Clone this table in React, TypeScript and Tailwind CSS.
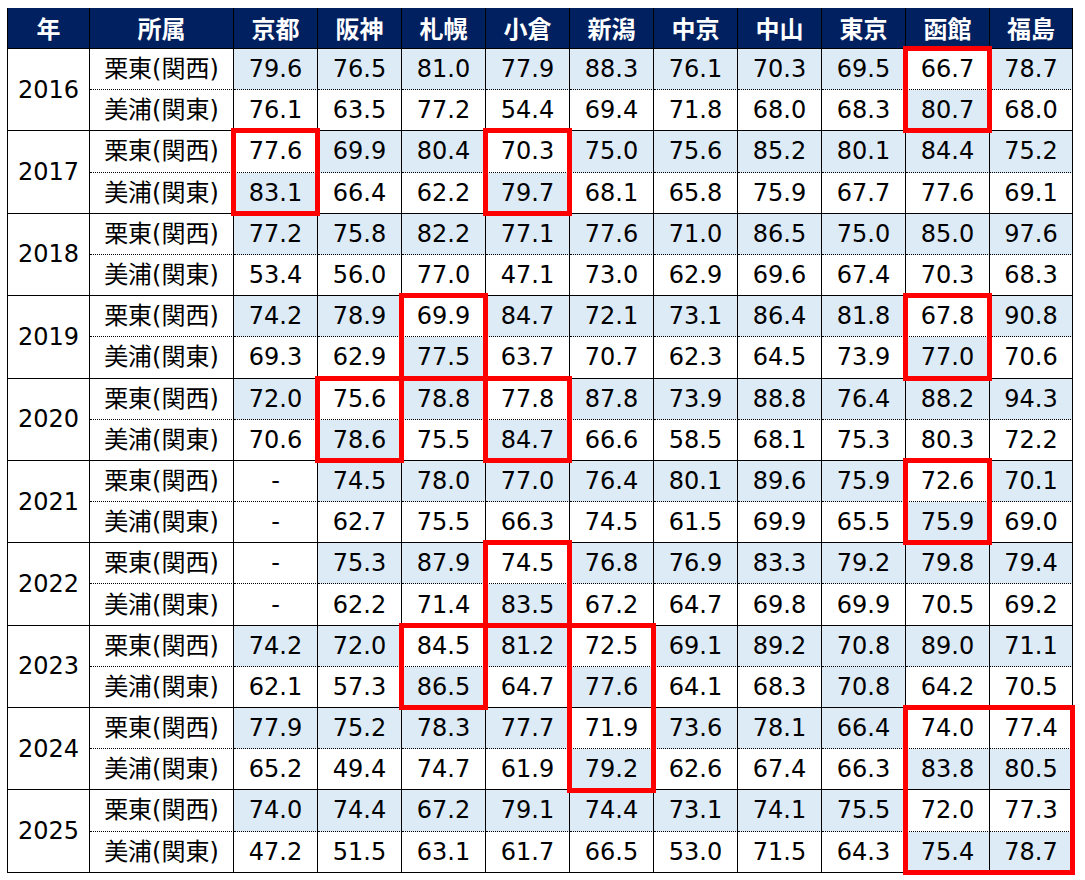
const venues = ['京都', '阪神', '札幌', '小倉', '新潟', '中京', '中山', '東京', '函館', '福島'];

type Row = (number | null)[];

interface YearData {
  year: number;
  west: Row;
  east: Row;
}

const data: YearData[] = [
  {
    year: 2016,
    west: [79.6, 76.5, 81.0, 77.9, 88.3, 76.1, 70.3, 69.5, 66.7, 78.7],
    east: [76.1, 63.5, 77.2, 54.4, 69.4, 71.8, 68.0, 68.3, 80.7, 68.0],
  },
  {
    year: 2017,
    west: [77.6, 69.9, 80.4, 70.3, 75.0, 75.6, 85.2, 80.1, 84.4, 75.2],
    east: [83.1, 66.4, 62.2, 79.7, 68.1, 65.8, 75.9, 67.7, 77.6, 69.1],
  },
  {
    year: 2018,
    west: [77.2, 75.8, 82.2, 77.1, 77.6, 71.0, 86.5, 75.0, 85.0, 97.6],
    east: [53.4, 56.0, 77.0, 47.1, 73.0, 62.9, 69.6, 67.4, 70.3, 68.3],
  },
  {
    year: 2019,
    west: [74.2, 78.9, 69.9, 84.7, 72.1, 73.1, 86.4, 81.8, 67.8, 90.8],
    east: [69.3, 62.9, 77.5, 63.7, 70.7, 62.3, 64.5, 73.9, 77.0, 70.6],
  },
  {
    year: 2020,
    west: [72.0, 75.6, 78.8, 77.8, 87.8, 73.9, 88.8, 76.4, 88.2, 94.3],
    east: [70.6, 78.6, 75.5, 84.7, 66.6, 58.5, 68.1, 75.3, 80.3, 72.2],
  },
  {
    year: 2021,
    west: [null, 74.5, 78.0, 77.0, 76.4, 80.1, 89.6, 75.9, 72.6, 70.1],
    east: [null, 62.7, 75.5, 66.3, 74.5, 61.5, 69.9, 65.5, 75.9, 69.0],
  },
  {
    year: 2022,
    west: [null, 75.3, 87.9, 74.5, 76.8, 76.9, 83.3, 79.2, 79.8, 79.4],
    east: [null, 62.2, 71.4, 83.5, 67.2, 64.7, 69.8, 69.9, 70.5, 69.2],
  },
  {
    year: 2023,
    west: [74.2, 72.0, 84.5, 81.2, 72.5, 69.1, 89.2, 70.8, 89.0, 71.1],
    east: [62.1, 57.3, 86.5, 64.7, 77.6, 64.1, 68.3, 70.8, 64.2, 70.5],
  },
  {
    year: 2024,
    west: [77.9, 75.2, 78.3, 77.7, 71.9, 73.6, 78.1, 66.4, 74.0, 77.4],
    east: [65.2, 49.4, 74.7, 61.9, 79.2, 62.6, 67.4, 66.3, 83.8, 80.5],
  },
  {
    year: 2025,
    west: [74.0, 74.4, 67.2, 79.1, 74.4, 73.1, 74.1, 75.5, 72.0, 77.3],
    east: [47.2, 51.5, 63.1, 61.7, 66.5, 53.0, 71.5, 64.3, 75.4, 78.7],
  },
];

// red frames: year group, venue col, how many groups / cols
const frames = [
  { g: 0, c: 8, ng: 1, nc: 1 },
  { g: 1, c: 0, ng: 1, nc: 1 },
  { g: 1, c: 3, ng: 1, nc: 1 },
  { g: 3, c: 2, ng: 1, nc: 1 },
  { g: 3, c: 8, ng: 1, nc: 1 },
  { g: 4, c: 1, ng: 1, nc: 1 },
  { g: 4, c: 3, ng: 1, nc: 1 },
  { g: 5, c: 8, ng: 1, nc: 1 },
  { g: 6, c: 3, ng: 1, nc: 1 },
  { g: 7, c: 2, ng: 1, nc: 1 },
  { g: 7, c: 4, ng: 2, nc: 1 },
  { g: 8, c: 8, ng: 2, nc: 2 },
];

const HEADER_H = 41;
const ROW_H = 41.2;
const FIRST_W = 82;
const SECOND_W = 144;
const COL_W = 84;

function isHigher(a: number | null, b: number | null) {
  if (a === null || b === null) return false;
  return a >= b;
}

function fmt(v: number | null) {
  return v === null ? '-' : v.toFixed(1);
}

const headCell =
  "flex items-center justify-center border-r border-b border-black bg-[#002060] font-['Noto_Sans_CJK_JP',sans-serif] text-[24px] font-bold text-white";

export default function App() {
  return (
    <div className="min-h-[880px] bg-white pl-[7px] pt-[8px] font-['DejaVu_Sans','Noto_Sans_CJK_JP',sans-serif]">
      <div className="relative w-[1066px] border-l border-black">
        <div className="grid grid-cols-[82px_144px_repeat(9,84px)_83px] grid-rows-[41px_repeat(20,41.2px)] text-[24px] text-black">
          <div className={headCell}>年</div>
          <div className={headCell}>所属</div>
          {venues.map((v) => (
            <div key={v} className={headCell}>
              {v}
            </div>
          ))}

          {data.map((d) => (
            <YearGroup key={d.year} d={d} />
          ))}
        </div>

        {frames.map((f, i) => (
          <div
            key={i}
            className="pointer-events-none absolute border-[5px] border-[#ff0000]"
            style={{
              left: FIRST_W + SECOND_W - 3 + COL_W * f.c,
              top: HEADER_H - 3 + ROW_H * 2 * f.g,
              width: COL_W * f.nc + 5 - (f.c + f.nc === 10 ? 1 : 0),
              height: ROW_H * 2 * f.ng + 5,
            }}
          />
        ))}
      </div>
    </div>
  );
}

function YearGroup({ d }: { d: YearData }) {
  return (
    <>
      <div className="row-span-2 flex items-center justify-center border-r border-b border-black">{d.year}</div>
      <div className="flex items-center justify-center border-r border-b border-black [border-bottom-style:dotted]">
        栗東(関西)
      </div>
      {d.west.map((v, i) => (
        <div
          key={`w${i}`}
          className={`flex items-center justify-center border-r border-b border-black [border-bottom-style:dotted] ${
            isHigher(v, d.east[i]) ? 'bg-[#ddebf7]' : 'bg-white'
          }`}
        >
          {fmt(v)}
        </div>
      ))}
      <div className="flex items-center justify-center border-r border-b border-black">美浦(関東)</div>
      {d.east.map((v, i) => (
        <div
          key={`e${i}`}
          className={`flex items-center justify-center border-r border-b border-black ${
            isHigher(v, d.west[i]) ? 'bg-[#ddebf7]' : 'bg-white'
          }`}
        >
          {fmt(v)}
        </div>
      ))}
    </>
  );
}
